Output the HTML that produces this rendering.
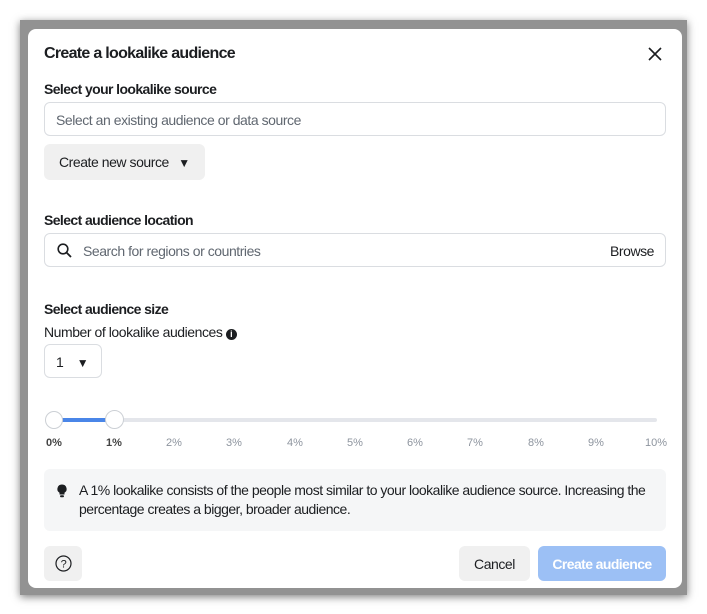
<!DOCTYPE html>
<html><head><style>
*{box-sizing:border-box;margin:0;padding:0}
body{width:707px;height:614px;background:#fff;font-family:"Liberation Sans",sans-serif;position:relative;overflow:hidden;color:#1c1e21;letter-spacing:-0.45px}
.bd{position:absolute;left:20px;top:20px;width:667px;height:575px;background:#929292;box-shadow:0 2px 8px rgba(0,0,0,.5)}
.m{position:absolute;left:28px;top:29px;width:654px;height:559px;background:#fff;border-radius:8px}
.a{position:absolute;white-space:nowrap}
.lbl{font-size:14px;font-weight:bold;color:#1c1e21}
.inp{position:absolute;left:16px;width:622px;height:34px;border:1px solid #dadde1;border-radius:6px;font-size:14px;color:#606770;white-space:nowrap}
.btn{position:absolute;background:#f0f0f0;border-radius:6px;font-size:14px;white-space:nowrap}
.tk{position:absolute;top:408px;font-size:11px;color:#8d949e;width:30px;text-align:center;letter-spacing:0}
</style></head><body>
<div class="bd"></div>
<div class="m">
<div class="a" style="left:16px;top:16px;font-size:16px;font-weight:bold;letter-spacing:-0.7px">Create a lookalike audience</div>
<svg class="a" style="left:620px;top:18px" width="14" height="14" viewBox="0 0 14 14"><path d="M1 1L13 13M13 1L1 13" stroke="#1c1e21" stroke-width="1.6"/></svg>
<div class="a lbl" style="left:16px;top:52px;letter-spacing:-0.6px">Select your lookalike source</div>
<div class="inp" style="top:73px;padding:9px 11px">Select an existing audience or data source</div>
<div class="btn" style="left:16px;top:115px;width:161px;height:36px;padding:10px 15px">Create new source <span style="font-size:12px;margin-left:6px">▼</span></div>
<div class="a lbl" style="left:16px;top:183px;letter-spacing:-0.6px">Select audience location</div>
<div class="inp" style="top:204px;padding:9px 11px 9px 38px;color:#606770">Search for regions or countries<span style="position:absolute;right:11px;color:#1c1e21">Browse</span>
<svg style="position:absolute;left:12px;top:9px" width="15" height="15" viewBox="0 0 15 15"><circle cx="6" cy="6" r="4.8" fill="none" stroke="#1c1e21" stroke-width="1.6"/><path d="M9.5 9.5L14 14" stroke="#1c1e21" stroke-width="1.8"/></svg></div>
<div class="a lbl" style="left:16px;top:272px;letter-spacing:-0.6px">Select audience size</div>
<div class="a" style="left:16px;top:295px;font-size:14px">Number of lookalike audiences <span style="display:inline-block;width:11px;height:11px;border-radius:50%;background:#1c1e21;color:#fff;font-size:9px;text-align:center;line-height:11px;font-weight:bold;vertical-align:0;letter-spacing:0">i</span></div>
<div style="position:absolute;left:16px;top:315px;width:58px;height:34px;border:1px solid #dadde1;border-radius:6px;font-size:14px;padding:9px 11px;white-space:nowrap">1 <span style="font-size:12px;margin-left:10px">▼</span></div>
<div style="position:absolute;left:26px;top:389px;width:603px;height:4px;background:#e4e6eb;border-radius:2px"></div>
<div style="position:absolute;left:26px;top:389px;width:61px;height:4px;background:#4a86e8"></div>
<div style="position:absolute;left:17px;top:382px;width:18px;height:18px;border-radius:50%;background:#fff;border:1px solid #ccd0d5"></div>
<div style="position:absolute;left:77px;top:381px;width:19px;height:19px;border-radius:50%;background:#fff;border:1px solid #ccd0d5"></div>
<div class="tk" style="left:11px;color:#444;font-weight:bold">0%</div>
<div class="tk" style="left:71px;color:#444;font-weight:bold">1%</div>
<div class="tk" style="left:131px">2%</div><div class="tk" style="left:191px">3%</div><div class="tk" style="left:252px">4%</div><div class="tk" style="left:312px">5%</div><div class="tk" style="left:372px">6%</div><div class="tk" style="left:432px">7%</div><div class="tk" style="left:493px">8%</div><div class="tk" style="left:553px">9%</div><div class="tk" style="left:613px">10%</div>
<div style="position:absolute;left:16px;top:440px;width:622px;height:62px;background:#f5f6f7;border-radius:6px;padding:12px 20px 0 35px;font-size:14px;line-height:19px;letter-spacing:-0.5px">A 1% lookalike consists of the people most similar to your lookalike audience source. Increasing the percentage creates a bigger, broader audience.
<svg style="position:absolute;left:13px;top:15px" width="10" height="14" viewBox="0 0 10 14"><path d="M5 0.5A4.5 4.5 0 0 0 2.5 8.8V10.5H7.5V8.8A4.5 4.5 0 0 0 5 0.5Z" fill="#1c1e21"/><rect x="3" y="11.3" width="4" height="2" rx="1" fill="#1c1e21"/></svg></div>
<div class="btn" style="left:16px;top:517px;width:38px;height:35px"><svg style="position:absolute;left:11px;top:9px" width="17" height="17" viewBox="0 0 17 17"><circle cx="8.5" cy="8.5" r="7.5" fill="none" stroke="#1c1e21" stroke-width="1.2"/><text x="8.5" y="12.5" font-size="11" text-anchor="middle" font-family="Liberation Sans" fill="#1c1e21">?</text></svg></div>
<div class="btn" style="left:431px;top:517px;width:71px;height:35px;padding:10px 0;text-align:center">Cancel</div>
<div class="btn" style="left:510px;top:517px;width:128px;height:35px;padding:10px 0;text-align:center;background:#9cc0f5;color:#fff;font-weight:bold;letter-spacing:-0.6px">Create audience</div>
</div>
</body></html>
